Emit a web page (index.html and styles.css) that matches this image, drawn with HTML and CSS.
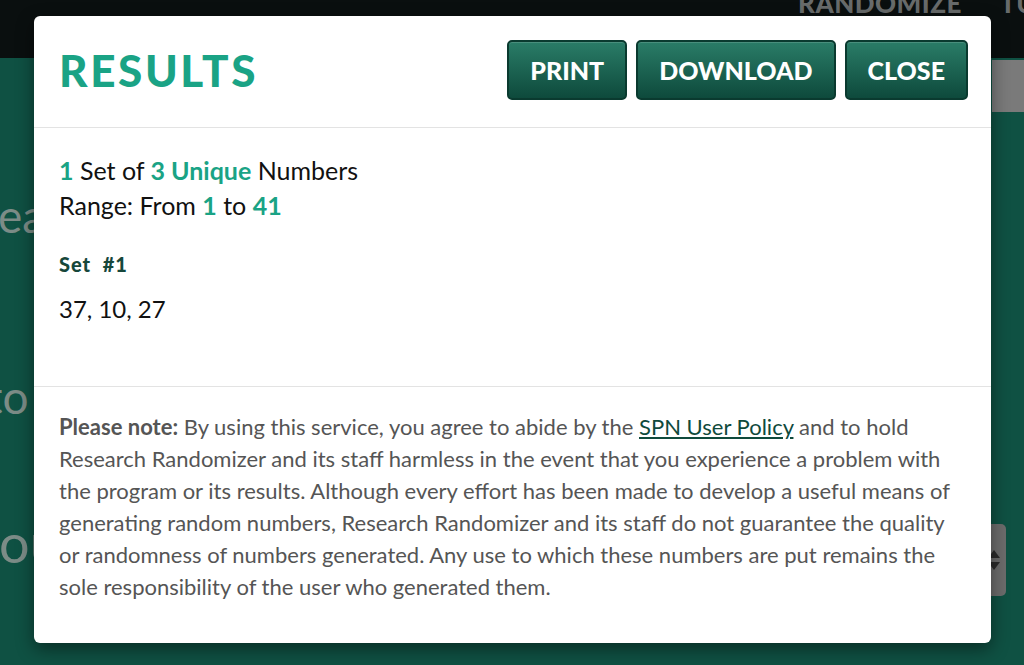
FILE: index.html
```html
<!DOCTYPE html>
<html lang="en">
<head>
    <meta charset="UTF-8">
    <meta name="viewport" content="width=device-width, initial-scale=1.0">
    <title>Research Randomizer - Results</title>
    <link rel="stylesheet" href="styles.css">
</head>
<body>
    <div class="page">
        <div class="topbar">
            <div class="nav">
                <span class="nav-item">RANDOMIZE</span>
                <span class="nav-item">TUTORIAL</span>
            </div>
        </div>
        <div class="main">
            <div class="form-text">
                <p class="line-a">ea</p>
                <p class="line-b">to s</p>
                <p class="line-c">you</p>
            </div>
            <div class="side">
                <div class="side-bar"></div>
                <div class="select-box">
                    <span class="arrow-up"></span>
                    <span class="arrow-down"></span>
                </div>
            </div>
        </div>
    </div>

    <div class="modal">
        <div class="modal-header">
            <h1 class="modal-title">RESULTS</h1>
            <div class="actions">
                <button class="btn">PRINT</button>
                <button class="btn">DOWNLOAD</button>
                <button class="btn">CLOSE</button>
            </div>
        </div>

        <div class="modal-body">
            <p class="summary"><b class="hl">1</b> Set of <b class="hl">3 Unique</b> Numbers<br>
                Range: From <b class="hl">1</b> to <b class="hl">41</b></p>
            <h2 class="set-title">Set&nbsp; #1</h2>
            <p class="set-numbers">37, 10, 27</p>
        </div>

        <div class="modal-footer">
            <p><strong>Please note:</strong> By using this service, you agree to abide by the <a href="#">SPN User Policy</a> and to hold Research Randomizer and its staff harmless in the event that you experience a problem with the program or its results. Although every effort has been made to develop a useful means of generating random numbers, Research Randomizer and its staff do not guarantee the quality or randomness of numbers generated. Any use to which these numbers are put remains the sole responsibility of the user who generated them.</p>
        </div>
    </div>
</body>
</html>
```

FILE: styles.css
```css
body {
    margin: 0;
    padding: 0;
    font-family: Lato, 'Open Sans', sans-serif;
    background-color: #0f5143;
    overflow: hidden;
    height: 665px;
}

/* page behind the overlay */
.page {
    height: 665px;
    display: flex;
    flex-direction: column;
}

.topbar {
    height: 58px;
    background-color: #0a0f0f;
    overflow: hidden;
}

.nav {
    display: flex;
    gap: 38px;
    margin-left: 798px;
    margin-top: -14px;
}

.nav-item {
    color: #686b6b;
    font-size: 26px;
    font-weight: 900;
    letter-spacing: 0.5px;
    line-height: 34px;
}

.main {
    flex: 1;
    display: flex;
    justify-content: space-between;
    background-color: #0f5143;
}

.form-text {
    overflow: hidden;
    width: 34px;
}

.form-text p {
    margin: 0;
    color: #7c8c87;
    font-size: 46px;
    white-space: nowrap;
}

.line-a {
    margin-top: 130px !important;
    text-indent: -2px;
}

.line-b {
    margin-top: 126px !important;
    text-indent: -14px;
}

.line-c {
    margin-top: 86px !important;
    font-size: 54px !important;
    text-indent: -28px;
}

.side {
    width: 32px;
    display: flex;
    flex-direction: column;
}

.side-bar {
    height: 52px;
    margin-top: 2px;
    background-color: #7a7a7a;
}

.select-box {
    margin-top: 412px;
    width: 44px;
    height: 72px;
    margin-left: -30px;
    background-color: #6c6c6c;
    border-radius: 5px;
    display: flex;
    flex-direction: column;
    align-items: flex-end;
    justify-content: center;
    gap: 4px;
    padding-right: 6px;
    box-sizing: border-box;
}

.arrow-up {
    border-left: 6px solid transparent;
    border-right: 6px solid transparent;
    border-bottom: 8px solid #2b2b2b;
}

.arrow-down {
    border-left: 6px solid transparent;
    border-right: 6px solid transparent;
    border-top: 8px solid #2b2b2b;
}

/* results modal */
.modal {
    position: absolute;
    left: 34px;
    top: 16px;
    width: 957px;
    height: 627px;
    background-color: #fff;
    border-radius: 6px;
    box-shadow: 0 6px 18px rgba(0, 0, 0, 0.45);
    overflow: hidden;
}

.modal-header {
    display: flex;
    justify-content: space-between;
    align-items: center;
    padding: 24px 23px 27px 25px;
    border-bottom: 1px solid #e3e3e3;
}

.modal-title {
    margin: 0;
    color: #1aa385;
    font-size: 44px;
    font-weight: 900;
    letter-spacing: 2.6px;
}

.actions {
    display: flex;
    gap: 9px;
}

.btn {
    height: 60px;
    padding: 0 21px;
    font-family: Lato, sans-serif;
    font-size: 25px;
    font-weight: 900;
    color: #fff;
    background: linear-gradient(#2a7c67, #0e4a3c);
    border: 2px solid #0a3a2f;
    border-radius: 5px;
    box-shadow: inset 0 1px 0 rgba(255, 255, 255, 0.15);
    cursor: pointer;
}

.modal-body {
    padding: 25px 25px 63px;
    border-bottom: 1px solid #e3e3e3;
    color: #111;
}

.summary {
    margin: 0;
    font-size: 25px;
    line-height: 35px;
}

.hl {
    color: #1aa385;
}

.set-title {
    margin: 29px 0 0;
    color: #16473b;
    font-size: 20px;
    font-weight: 900;
    letter-spacing: 1px;
}

.set-numbers {
    margin: 18px 0 0;
    font-size: 24px;
}

.modal-footer {
    padding: 24px 25px 40px;
}

.modal-footer p {
    margin: 0;
    color: #555;
    font-size: 22px;
    line-height: 32px;
}

.modal-footer strong {
    color: #555;
}

.modal-footer a {
    color: #0f4a3c;
    text-decoration: underline;
}
```
